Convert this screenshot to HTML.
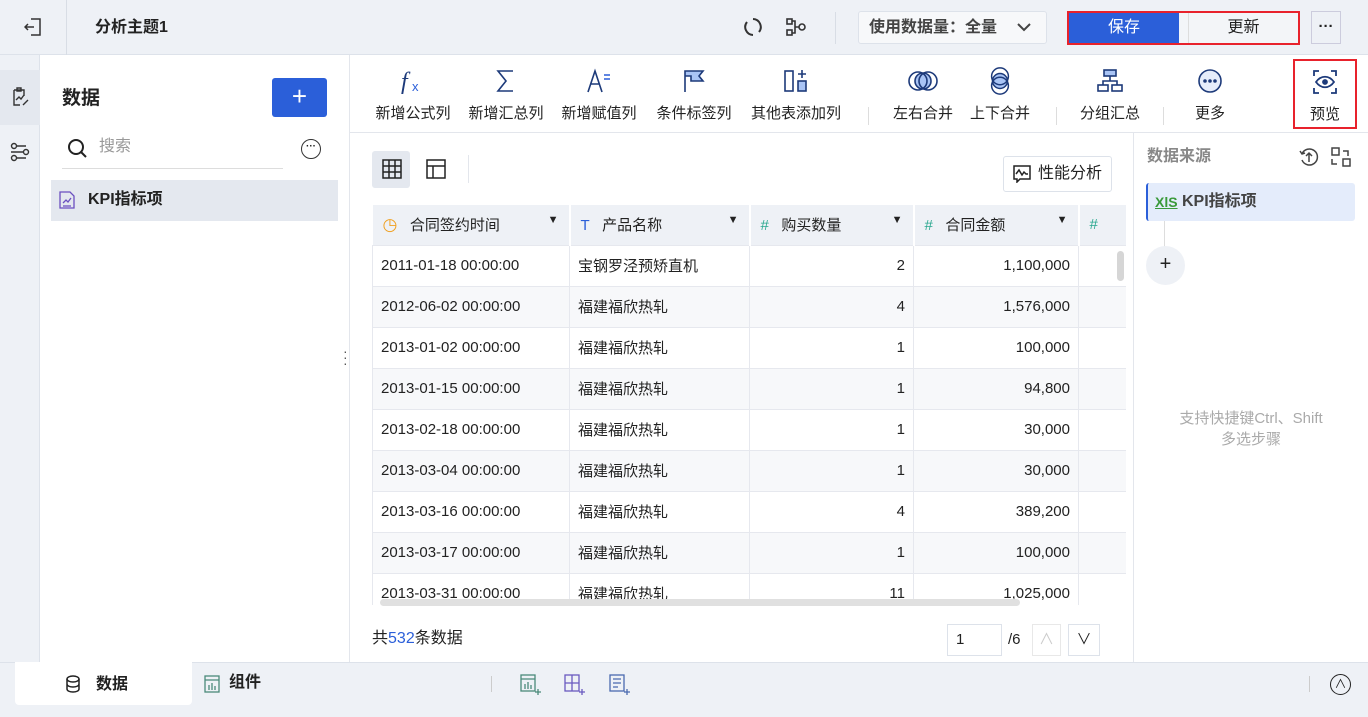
<!DOCTYPE html>
<html><head><meta charset="utf-8"><style>
*{box-sizing:border-box;margin:0;padding:0}
body{width:1368px;height:717px;overflow:hidden;background:#fff;font-family:"Liberation Sans","Noto Sans CJK SC",sans-serif;font-size:15px;color:#222;position:relative}
.abs{position:absolute}
.top{left:0;top:0;width:1368px;height:55px;background:#eef1f6;border-bottom:1px solid #dde2ea}
.tb{top:55px;left:350px;width:1018px;height:78px;border-bottom:1px solid #e3e6ec;background:#fff}
.ti{position:absolute;top:0;text-align:center;font-size:15px;color:#222;line-height:20px}
.ti svg{display:block;margin:12px auto 9px}
.sep{position:absolute;top:52px;width:1px;height:18px;background:#ddd}
table{border-collapse:collapse;font-size:15px}
td{height:41px;border:1px solid #e6e8ee;padding:0 8px;white-space:nowrap}
th{height:40px;background:#eef1f6;font-weight:normal;text-align:left;border-right:2px solid #fff;padding:0 10px}
.r{text-align:right}
tr:nth-child(odd) td{background:#f7f8fa}
</style></head><body>
<div class="abs top">
 <div class="abs" style="left:66px;top:0;width:1px;height:55px;background:#d8dde5"></div>
 <svg class="abs" style="left:24px;top:17px" width="18" height="20" viewBox="0 0 18 20" fill="none" stroke="#333" stroke-width="1.5"><path d="M7 2h9v16H7M1 10h9M4 7l-3 3 3 3"/></svg>
 <div class="abs" style="left:95px;top:18px;font-weight:bold;font-size:16px;line-height:20px">分析主题1</div>
 <svg class="abs" style="left:742px;top:16px" width="22" height="22" viewBox="0 0 22 22" fill="none" stroke="#333" stroke-width="2"><path d="M11 3a8 8 0 0 1 6 13M11 19a8 8 0 0 1-6-13"/></svg>
 <svg class="abs" style="left:785px;top:17px" width="22" height="20" viewBox="0 0 22 20" fill="none" stroke="#333" stroke-width="1.6"><rect x="2" y="2" width="5" height="5"/><rect x="2" y="13" width="5" height="5"/><circle cx="17" cy="10" r="3"/><path d="M7 4h3v12H7M10 10h4"/></svg>
 <div class="abs" style="left:835px;top:12px;width:1px;height:32px;background:#d8dde5"></div>
 <div class="abs" style="left:858px;top:11px;width:189px;height:33px;background:#f7f8fa;border:1px solid #dde2ea;border-radius:3px;font-weight:bold;font-size:16px;color:#444;padding:0 10px;line-height:31px">使用数据量：全量 <svg style="position:absolute;right:14px;top:10px" width="16" height="10" viewBox="0 0 16 10" fill="none" stroke="#444" stroke-width="2"><path d="M2 2l6 6 6-6"/></svg></div>
 <div class="abs" style="left:1067px;top:11px;width:233px;height:34px;border:2px solid #e8222c;background:#f3f5f8">
  <div class="abs" style="left:0;top:0;width:110px;height:30px;background:#2b5fd9;color:#fff;font-size:16px;text-align:center;line-height:30px">保存</div>
  <div class="abs" style="left:119px;top:0;width:110px;height:30px;font-size:16px;text-align:center;line-height:30px;border-left:1px solid #ddd">更新</div>
 </div>
 <div class="abs" style="left:1311px;top:11px;width:30px;height:33px;border:1px solid #ccd;text-align:center;line-height:30px;font-weight:bold">···</div>
</div>
<div class="abs" style="left:0;top:55px;width:40px;height:607px;background:#eef1f6;border-right:1px solid #dde2ea"></div>
<div class="abs" style="left:0;top:70px;width:40px;height:55px;background:#e4e8ef"></div>
<svg class="abs" style="left:10px;top:87px" width="20" height="20" viewBox="0 0 20 20" fill="none" stroke="#333" stroke-width="1.4"><path d="M4 3h10v6M4 3v15h6M7 1h4v3H7zM6 13l3-3 2 2 3-4M13 18l5-5"/></svg>
<svg class="abs" style="left:10px;top:142px" width="20" height="20" viewBox="0 0 20 20" fill="none" stroke="#333" stroke-width="1.4"><circle cx="4" cy="4" r="2.5"/><circle cx="16" cy="10" r="2.5"/><circle cx="4" cy="16" r="2.5"/><path d="M7 4h9M1 10h12M7 16h9"/></svg>
<div class="abs" style="left:349px;top:55px;width:1px;height:607px;background:#e3e6ec"></div>
<div class="abs" style="left:62px;top:87px;font-size:19px;font-weight:bold;line-height:24px">数据</div>
<div class="abs" style="left:272px;top:78px;width:55px;height:39px;background:#2b5fd9;border-radius:3px;color:#fff;font-size:26px;text-align:center;line-height:37px">+</div>
<svg class="abs" style="left:67px;top:138px" width="22" height="22" viewBox="0 0 22 22" fill="none" stroke="#222" stroke-width="2"><circle cx="9" cy="9" r="7"/><path d="M14 14l5 5"/></svg>
<div class="abs" style="left:99px;top:137px;color:#999;font-size:16px;line-height:20px">搜索</div>
<div class="abs" style="left:62px;top:168px;width:221px;height:1px;background:#ddd"></div>
<div class="abs" style="left:301px;top:139px;width:20px;height:20px;border:1.5px solid #333;border-radius:50%;font-size:10px;text-align:center;line-height:14px;font-weight:bold">···</div>
<div class="abs" style="left:51px;top:180px;width:287px;height:41px;background:#e4e8ef"></div>
<svg class="abs" style="left:59px;top:191px" width="16" height="18" viewBox="0 0 16 18" fill="none" stroke="#6b4fc0" stroke-width="1.3"><path d="M1 1h10l4 4v12H1zM4 12l3-3 2 2 3-4M4 15h8"/></svg>
<div class="abs" style="left:88px;top:190px;font-weight:bold;font-size:16px;line-height:20px">KPI指标项</div>
<div class="abs" style="left:343px;top:348px;font-size:14px;line-height:6px;color:#555">·<br>·<br>·</div>
<div class="abs tb">
 <div class="ti" style="left:20px;width:86px"><svg width="28" height="28" viewBox="0 0 28 28"><text x="2" y="22" font-family="Liberation Serif" font-style="italic" font-size="24" fill="#1d3a7a">f</text><text x="13" y="24" font-size="13" fill="#2b5fd9" font-family="Liberation Sans">x</text></svg>新增公式列</div>
 <div class="ti" style="left:113px;width:86px"><svg width="28" height="28" viewBox="0 0 28 28" fill="none" stroke="#1d3a7a" stroke-width="1.6"><path d="M21 4H6l8 10-8 10h15"/></svg>新增汇总列</div>
 <div class="ti" style="left:206px;width:86px"><svg width="28" height="28" viewBox="0 0 28 28" fill="none" stroke="#1d3a7a" stroke-width="1.6"><path d="M3 25L10 4l7 21M6 17h9"/><path d="M19 8h6M19 12h6" stroke="#2b5fd9"/></svg>新增赋值列</div>
 <div class="ti" style="left:299px;width:90px"><svg width="28" height="28" viewBox="0 0 28 28" fill="none" stroke="#1d3a7a" stroke-width="1.6"><path d="M5 25V4h18l-4 5 4 5H11v-5H5" fill="#a9c4f5"/></svg>条件标签列</div>
 <div class="ti" style="left:393px;width:106px"><svg width="28" height="28" viewBox="0 0 28 28" fill="none" stroke="#1d3a7a" stroke-width="1.6"><rect x="3" y="4" width="8" height="20"/><rect x="16" y="14" width="8" height="10" fill="#a9c4f5"/><path d="M20 3v8M16 7h8"/></svg>其他表添加列</div>
 <div class="sep" style="left:518px"></div>
 <div class="ti" style="left:536px;width:74px"><svg width="30" height="28" viewBox="0 0 30 28" fill="none" stroke="#1d3a7a" stroke-width="1.6"><path d="M15 6a8 8 0 0 1 0 16a8 8 0 0 1 0-16z" fill="#a9c4f5"/><circle cx="10" cy="14" r="9"/><circle cx="20" cy="14" r="9"/></svg>左右合并</div>
 <div class="ti" style="left:613px;width:74px"><svg width="28" height="28" viewBox="0 0 28 30" fill="none" stroke="#1d3a7a" stroke-width="1.6"><path d="M6 15a8 8 0 0 1 16 0a8 8 0 0 1-16 0z" fill="#a9c4f5"/><circle cx="14" cy="10" r="9"/><circle cx="14" cy="20" r="9"/></svg>上下合并</div>
 <div class="sep" style="left:706px"></div>
 <div class="ti" style="left:723px;width:74px"><svg width="28" height="28" viewBox="0 0 28 28" fill="none" stroke="#1d3a7a" stroke-width="1.6"><rect x="8" y="3" width="12" height="6" fill="#a9c4f5"/><rect x="2" y="18" width="10" height="6"/><rect x="16" y="18" width="10" height="6"/><path d="M14 9v5M7 18v-4h14v4"/></svg>分组汇总</div>
 <div class="sep" style="left:813px"></div>
 <div class="ti" style="left:823px;width:74px"><svg width="28" height="28" viewBox="0 0 28 28" fill="#e6edfb" stroke="#1d3a7a" stroke-width="1.6"><circle cx="14" cy="14" r="11"/><circle cx="9" cy="14" r="1" fill="#1d3a7a"/><circle cx="14" cy="14" r="1" fill="#1d3a7a"/><circle cx="19" cy="14" r="1" fill="#1d3a7a"/></svg>更多</div>
 <div class="abs" style="left:943px;top:4px;width:64px;height:70px;border:2px solid #e8222c;text-align:center;font-size:15px;line-height:20px"><svg style="display:block;margin:8px auto 10px" width="26" height="26" viewBox="0 0 26 26" fill="none" stroke="#1d3a7a" stroke-width="1.8"><path d="M2 7V2h5M19 2h5v5M24 19v5h-5M7 24H2v-5M4 13c5-7 13-7 18 0c-5 7-13 7-18 0z"/><circle cx="13" cy="13" r="2" fill="#1d3a7a"/></svg>预览</div>
</div>
<div class="abs" style="left:372px;top:151px;width:38px;height:37px;background:#e4e8ef;border-radius:3px"></div>
<svg class="abs" style="left:382px;top:159px" width="20" height="20" viewBox="0 0 20 20" fill="none" stroke="#222" stroke-width="1.5"><rect x="1" y="1" width="18" height="18"/><path d="M7 1v18M13 1v18M1 7h18M1 13h18"/></svg>
<svg class="abs" style="left:426px;top:159px" width="20" height="20" viewBox="0 0 20 20" fill="none" stroke="#222" stroke-width="1.5"><rect x="1" y="1" width="18" height="18"/><path d="M1 7h18M7 7v12"/></svg>
<div class="abs" style="left:468px;top:155px;width:1px;height:28px;background:#e3e6ec"></div>
<div class="abs" style="left:1003px;top:156px;width:109px;height:36px;border:1px solid #dde2ea;border-radius:3px;padding:0 0 0 34px;font-size:16px;line-height:34px">性能分析</div>
<svg class="abs" style="left:1013px;top:165px" width="18" height="18" viewBox="0 0 18 18" fill="none" stroke="#222" stroke-width="1.5"><path d="M1 1h16v13H7l-3 3v-3H1zM3 9l3-4 3 5 2-3 2 2h2"/></svg>
<div class="abs" style="left:372px;top:205px;width:754px;height:400px;overflow:hidden">
<table style="width:780px;table-layout:fixed">
<colgroup><col style="width:197px"><col style="width:180px"><col style="width:164px"><col style="width:165px"><col style="width:74px"></colgroup>
<tr><th><span style="color:#f0a020;font-size:17px">◷</span>&nbsp;&nbsp; 合同签约时间 <span style="float:right;font-size:11px">▼</span></th><th><span style="color:#2b5fd9">T</span>&nbsp;&nbsp; 产品名称<span style="float:right;font-size:11px">▼</span></th><th><span style="color:#2aa88f">#</span>&nbsp;&nbsp; 购买数量<span style="float:right;font-size:11px">▼</span></th><th><span style="color:#2aa88f">#</span>&nbsp;&nbsp; 合同金额<span style="float:right;font-size:11px">▼</span></th><th><span style="color:#2aa88f">#</span></th></tr>
<tr><td>2011-01-18 00:00:00</td><td>宝钢罗泾预矫直机</td><td class="r">2</td><td class="r">1,100,000</td><td></td></tr>
<tr><td>2012-06-02 00:00:00</td><td>福建福欣热轧</td><td class="r">4</td><td class="r">1,576,000</td><td></td></tr>
<tr><td>2013-01-02 00:00:00</td><td>福建福欣热轧</td><td class="r">1</td><td class="r">100,000</td><td></td></tr>
<tr><td>2013-01-15 00:00:00</td><td>福建福欣热轧</td><td class="r">1</td><td class="r">94,800</td><td></td></tr>
<tr><td>2013-02-18 00:00:00</td><td>福建福欣热轧</td><td class="r">1</td><td class="r">30,000</td><td></td></tr>
<tr><td>2013-03-04 00:00:00</td><td>福建福欣热轧</td><td class="r">1</td><td class="r">30,000</td><td></td></tr>
<tr><td>2013-03-16 00:00:00</td><td>福建福欣热轧</td><td class="r">4</td><td class="r">389,200</td><td></td></tr>
<tr><td>2013-03-17 00:00:00</td><td>福建福欣热轧</td><td class="r">1</td><td class="r">100,000</td><td></td></tr>
<tr><td>2013-03-31 00:00:00</td><td>福建福欣热轧</td><td class="r">11</td><td class="r">1,025,000</td><td></td></tr>
</table></div>
<div class="abs" style="left:380px;top:599px;width:640px;height:7px;background:#e0e0e0;border-radius:4px"></div>
<div class="abs" style="left:1117px;top:251px;width:7px;height:30px;background:#d6d6d6;border-radius:4px"></div>
<div class="abs" style="left:372px;top:629px;font-size:16px;line-height:20px">共<span style="color:#2b5fd9">532</span>条数据</div>
<div class="abs" style="left:947px;top:624px;width:55px;height:32px;border:1px solid #dde2ea;padding:0 8px;line-height:30px">1</div>
<div class="abs" style="left:1008px;top:630px;line-height:20px">/6</div>
<div class="abs" style="left:1032px;top:624px;width:29px;height:32px;border:1px solid #e8e8e8;color:#ccc;text-align:center;line-height:30px">∧</div>
<div class="abs" style="left:1068px;top:624px;width:32px;height:32px;border:1px solid #dde2ea;text-align:center;line-height:30px">∨</div>
<div class="abs" style="left:1133px;top:133px;width:1px;height:529px;background:#e3e6ec"></div>
<div class="abs" style="left:1147px;top:147px;color:#888;font-weight:bold;font-size:16px;line-height:20px">数据来源</div>
<svg class="abs" style="left:1298px;top:146px" width="22" height="22" viewBox="0 0 22 22" fill="none" stroke="#444" stroke-width="1.5"><path d="M4 8a8 8 0 1 1 0 6M11 16V7M8 10l3-3 3 3M2 5l2 3 3-1"/></svg>
<svg class="abs" style="left:1331px;top:147px" width="20" height="20" viewBox="0 0 20 20" fill="none" stroke="#444" stroke-width="1.5"><rect x="1" y="1" width="7" height="7"/><rect x="12" y="12" width="7" height="7"/><path d="M12 4h5v5M1 12v5h5"/></svg>
<div class="abs" style="left:1146px;top:183px;width:209px;height:38px;background:#e4ecfb;border-left:2px solid #2b5fd9;border-radius:3px"></div>
<div class="abs" style="left:1155px;top:193px;color:#3a9a3a;font-weight:bold;font-size:14px;text-decoration:underline;line-height:18px">XlS</div>
<div class="abs" style="left:1182px;top:192px;font-weight:bold;font-size:16px;color:#444;line-height:20px">KPI指标项</div>
<div class="abs" style="left:1164px;top:221px;width:1px;height:26px;background:#ddd"></div>
<div class="abs" style="left:1146px;top:246px;width:39px;height:39px;border-radius:50%;background:#eef1f6;text-align:center;line-height:37px;font-size:20px">+</div>
<div class="abs" style="left:1134px;top:408px;width:234px;text-align:center;color:#aaa;font-size:15px;line-height:21px">支持快捷键Ctrl、Shift<br>多选步骤</div>
<div class="abs" style="left:0;top:662px;width:1368px;height:55px;background:#eef1f6;border-top:1px solid #dde2ea"></div>
<div class="abs" style="left:15px;top:662px;width:177px;height:43px;background:#fff;border-radius:0 0 4px 4px"></div>
<svg class="abs" style="left:65px;top:675px" width="16" height="18" viewBox="0 0 16 18" fill="none" stroke="#222" stroke-width="1.5"><ellipse cx="8" cy="4" rx="6" ry="3"/><path d="M2 4v10c0 4 12 4 12 0V4M2 9c0 4 12 4 12 0"/></svg>
<div class="abs" style="left:96px;top:675px;font-weight:bold;font-size:16px;line-height:20px">数据</div>
<svg class="abs" style="left:204px;top:675px" width="16" height="18" viewBox="0 0 16 18" fill="none" stroke="#4a8a7a" stroke-width="1.3"><rect x="1" y="1" width="14" height="16"/><path d="M1 5h14M5 15v-5M8 15V8M11 15v-4"/></svg>
<div class="abs" style="left:229px;top:673px;font-weight:bold;font-size:16px;line-height:20px">组件</div>
<div class="abs" style="left:491px;top:676px;width:1px;height:16px;background:#ccc"></div>
<svg class="abs" style="left:520px;top:674px" width="22" height="22" viewBox="0 0 22 22" fill="none" stroke="#4a8a7a" stroke-width="1.3"><rect x="1" y="1" width="14" height="16"/><path d="M1 5h14M5 15v-5M8 15V8M11 15v-4M18 15v6M15 18h6"/></svg>
<svg class="abs" style="left:564px;top:674px" width="22" height="22" viewBox="0 0 22 22" fill="none" stroke="#6a5ac0" stroke-width="1.3"><rect x="1" y="1" width="14" height="16"/><path d="M8 1v16M1 9h14M18 15v6M15 18h6"/></svg>
<svg class="abs" style="left:609px;top:674px" width="22" height="22" viewBox="0 0 22 22" fill="none" stroke="#4a6ab0" stroke-width="1.3"><rect x="1" y="1" width="14" height="16"/><path d="M4 5h8M4 9h8M4 13h5M18 15v6M15 18h6"/></svg>
<div class="abs" style="left:1309px;top:676px;width:1px;height:16px;background:#ccc"></div>
<div class="abs" style="left:1330px;top:674px;width:21px;height:21px;border:1.5px solid #222;border-radius:50%;text-align:center;font-size:12px;line-height:18px">∧</div>
</body></html>
